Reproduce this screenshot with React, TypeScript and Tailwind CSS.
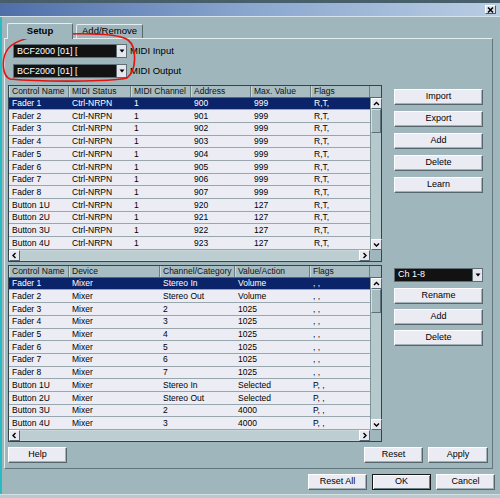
import React from 'react';
import clsx from 'clsx';

type Col = { label: string; w: string };

const topCols: Col[] = [
  { label: 'Control Name', w: 'w-[60px]' },
  { label: 'MIDI Status', w: 'w-[62px]' },
  { label: 'MIDI Channel', w: 'w-[60px]' },
  { label: 'Address', w: 'w-[60px]' },
  { label: 'Max. Value', w: 'w-[60px]' },
  { label: 'Flags', w: 'w-[59px]' },
];

const bottomCols: Col[] = [
  { label: 'Control Name', w: 'w-[60px]' },
  { label: 'Device', w: 'w-[91px]' },
  { label: 'Channel/Category', w: 'w-[75px]' },
  { label: 'Value/Action', w: 'w-[75px]' },
  { label: 'Flags', w: 'w-[60px]' },
];

const names = ['Fader 1', 'Fader 2', 'Fader 3', 'Fader 4', 'Fader 5', 'Fader 6', 'Fader 7', 'Fader 8', 'Button 1U', 'Button 2U', 'Button 3U', 'Button 4U'];
const addresses = ['900', '901', '902', '903', '904', '905', '906', '907', '920', '921', '922', '923'];

const topRows = names.map((n, i) => [n, 'Ctrl-NRPN', '1', addresses[i], i < 8 ? '999' : '127', 'R,T,']);

const bottomRows = [
  ['Fader 1', 'Mixer', 'Stereo In', 'Volume', ', ,'],
  ['Fader 2', 'Mixer', 'Stereo Out', 'Volume', ', ,'],
  ['Fader 3', 'Mixer', '2', '1025', ', ,'],
  ['Fader 4', 'Mixer', '3', '1025', ', ,'],
  ['Fader 5', 'Mixer', '4', '1025', ', ,'],
  ['Fader 6', 'Mixer', '5', '1025', ', ,'],
  ['Fader 7', 'Mixer', '6', '1025', ', ,'],
  ['Fader 8', 'Mixer', '7', '1025', ', ,'],
  ['Button 1U', 'Mixer', 'Stereo In', 'Selected', 'P, ,'],
  ['Button 2U', 'Mixer', 'Stereo Out', 'Selected', 'P, ,'],
  ['Button 3U', 'Mixer', '2', '4000', 'P, ,'],
  ['Button 4U', 'Mixer', '3', '4000', 'P, ,'],
];

// small chevron used on scrollbar buttons
function Chevron({ dir }: { dir: 'up' | 'down' | 'left' | 'right' }) {
  const pts = {
    up: '2,6 4.5,3.5 7,6',
    down: '2,3.5 4.5,6 7,3.5',
    left: '5.5,2 3,4.5 5.5,7',
    right: '3.5,2 6,4.5 3.5,7',
  }[dir];
  return (
    <svg width="9" height="9" viewBox="0 0 9 9">
      <polyline points={pts} fill="none" stroke="#000" strokeWidth="1.4" />
    </svg>
  );
}

function ScrollBtn({ dir }: { dir: 'up' | 'down' | 'left' | 'right' }) {
  return (
    <div className="w-[11px] h-[11px] shrink-0 flex items-center justify-center bg-[#e9e9f1] border border-t-white border-l-white border-r-[#56676e] border-b-[#56676e]">
      <Chevron dir={dir} />
    </div>
  );
}

function Btn({ label, className, isDefault }: { label: string; className?: string; isDefault?: boolean }) {
  return (
    <button
      type="button"
      className={clsx(
        'h-[16px] flex items-center justify-center bg-[#ebebf3] text-[9px] text-black border',
        isDefault
          ? 'border-[#1a1a1a] shadow-[inset_1px_1px_0_#fff,inset_-1px_-1px_0_#6d7d84]'
          : 'border-t-white border-l-white border-r-[#56666d] border-b-[#56666d] shadow-[inset_-1px_-1px_0_#a4b2b8]',
        className
      )}
    >
      {label}
    </button>
  );
}

function Dropdown({ text, className }: { text: string; className?: string }) {
  return (
    <div className={clsx('h-[14px] flex items-center bg-[#121212] border border-[#5e6e74]', className)}>
      <span className="flex-1 pl-[3px] text-white text-[9px] leading-none whitespace-nowrap overflow-hidden">{text}</span>
      <span className="w-[10px] h-full flex items-center justify-center bg-[#e6e6ee] border-l border-[#5e6e74]">
        <svg width="6" height="6" viewBox="0 0 6 6">
          <polygon points="0.5,1.5 5.5,1.5 3,4.5" fill="#000" />
        </svg>
      </span>
    </div>
  );
}

function Table({ cols, rows }: { cols: Col[]; rows: string[][] }) {
  return (
    <div className="w-[374px] border border-[#34444b] bg-[#a8bdc2]">
      {/* header */}
      <div className="flex h-[12px] border-b border-[#56686f]">
        {cols.map((c) => (
          <div
            key={c.label}
            className={clsx(c.w, 'h-full pl-[3px] flex items-center text-[8.5px] leading-none text-[#111] border-r border-[#6a7e85] shadow-[inset_1px_0_0_#c9d7da] whitespace-nowrap overflow-hidden')}
          >
            {c.label}
          </div>
        ))}
        <div className="flex-1" />
      </div>
      {/* body */}
      <div className="flex">
        <div className="w-[361px]">
          {rows.map((r, i) => (
            <div
              key={r[0]}
              className={clsx(
                'flex h-[12.7px] border-b border-[#9aa6ae]',
                i === 0 ? 'bg-[#0b2469] text-white' : 'bg-[#ececf4] text-black'
              )}
            >
              {r.map((cell, j) => (
                <div key={j} className={clsx(cols[j].w, 'pl-[3px] flex items-center text-[8.5px] leading-none whitespace-nowrap overflow-hidden')}>
                  {cell}
                </div>
              ))}
            </div>
          ))}
        </div>
        <div className="w-[11px] flex flex-col bg-[#b6c9cd] border-l border-[#7f9399]">
          <ScrollBtn dir="up" />
          <div className="h-[24px] bg-[#a7bcc1] border border-t-[#d5e1e3] border-l-[#d5e1e3] border-r-[#5e7178] border-b-[#5e7178]" />
          <div className="flex-1" />
          <ScrollBtn dir="down" />
        </div>
      </div>
      {/* horizontal scrollbar */}
      <div className="flex h-[11px]">
        <div className="w-[361px] flex bg-[#bcced2]">
          <ScrollBtn dir="left" />
          <div className="flex-1 border-t border-b border-[#c9d7da]" />
          <ScrollBtn dir="right" />
        </div>
        <div className="w-[11px] bg-[#9fb6bc]" />
      </div>
    </div>
  );
}

export default function App() {
  return (
    <div
      className="relative w-[500px] h-[498px] overflow-hidden bg-[#9fb6bc] text-black"
      style={{ fontFamily: '"Liberation Sans", Arial, sans-serif' }}
    >
      {/* title bar */}
      <div className="h-[3px] bg-[#475f6b]" />
      <div className="h-[14px] flex items-center justify-end pr-[4px] bg-gradient-to-r from-[#4f6ea9] via-[#8ba7cf] to-[#b9cde3] border-b border-[#d7e2ea]">
        <div className="w-[11px] h-[9px] flex items-center justify-center bg-[#dde3ea] border border-t-white border-l-white border-r-[#4b5a60] border-b-[#4b5a60]">
          <svg width="7" height="6" viewBox="0 0 7 6">
            <path d="M1 0.5 L6 5.5 M6 0.5 L1 5.5" stroke="#000" strokeWidth="1.5" />
          </svg>
        </div>
      </div>

      <div className="border-l-2 border-[#27bcc4] h-[477px] flex flex-col">
        {/* tabs */}
        <div className="flex items-end pl-[5px] mt-[5px] h-[16px]">
          <div className="w-[66px] h-[16px] flex items-center justify-center bg-[#9fb6bc] border border-b-0 border-t-[#e4eef0] border-l-[#e4eef0] border-r-[#56696f] rounded-t-[2px] font-bold text-[9.5px] relative z-10 -mb-px">
            Setup
          </div>
          <div className="w-[67px] h-[14px] ml-[3px] flex items-center justify-center bg-[#9fb6bc] border border-b-0 border-t-[#e4eef0] border-l-[#e4eef0] border-r-[#56696f] rounded-t-[2px] text-[9.5px]">
            Add/Remove
          </div>
        </div>

        {/* panel */}
        <div className="ml-[2px] w-[489px] h-[431px] border border-t-[#e4eef0] border-l-[#e4eef0] border-r-[#62767c] border-b-[#62767c] pt-[5px] pl-[3px]">
          <div className="ml-[5px] flex flex-col gap-[6px]">
            <div className="flex items-center">
              <Dropdown text="BCF2000 [01] [" className="w-[114px]" />
              <span className="ml-[3px] text-[9.5px]">MIDI Input</span>
            </div>
            <div className="flex items-center">
              <Dropdown text="BCF2000 [01] [" className="w-[114px]" />
              <span className="ml-[3px] text-[9.5px]">MIDI Output</span>
            </div>
          </div>

          <div className="flex mt-[6px]">
            <div className="flex flex-col gap-[3px]">
              <Table cols={topCols} rows={topRows} />
              <Table cols={bottomCols} rows={bottomRows} />
            </div>
            <div className="ml-[12px] w-[89px] flex flex-col">
              <div className="h-[178px] flex flex-col gap-[6px] pt-[4px]">
                <Btn label="Import" />
                <Btn label="Export" />
                <Btn label="Add" />
                <Btn label="Delete" />
                <Btn label="Learn" />
              </div>
              <div className="mt-[2px] pt-[3px] flex flex-col gap-[5px]">
                <Dropdown text="Ch 1-8" className="w-[89px] mb-[1px]" />
                <Btn label="Rename" />
                <Btn label="Add" />
                <Btn label="Delete" />
              </div>
            </div>
          </div>

          <div className="w-[480px] flex items-center mt-[5px]">
            <Btn label="Help" className="w-[59px]" />
            <div className="flex-1" />
            <Btn label="Reset" className="w-[59px]" />
            <Btn label="Apply" className="w-[60px] ml-[5px]" />
          </div>
        </div>

        {/* dialog buttons */}
        <div className="flex justify-end gap-[5px] pr-[5px] mt-[5px]">
          <Btn label="Reset All" className="w-[59px]" />
          <Btn label="OK" className="w-[59px]" isDefault />
          <Btn label="Cancel" className="w-[59px]" />
        </div>
      </div>
      <div className="h-[4px] bg-[#b9cace] border-t border-[#d3e0e3]" />

      {/* red hand-drawn marker around the MIDI ports */}
      <svg className="absolute left-0 top-0 pointer-events-none" width="150" height="90" viewBox="0 0 150 90">
        <path
          d="M44 35 C 80 33, 118 33, 128 40 C 137 47, 137 70, 127 78 C 110 82, 40 82, 10 79 C 2 76, 2 60, 6 52 C 10 43, 22 37, 50 35"
          fill="none"
          stroke="#e3130f"
          strokeWidth="1.6"
          strokeLinecap="round"
        />
      </svg>
    </div>
  );
}
